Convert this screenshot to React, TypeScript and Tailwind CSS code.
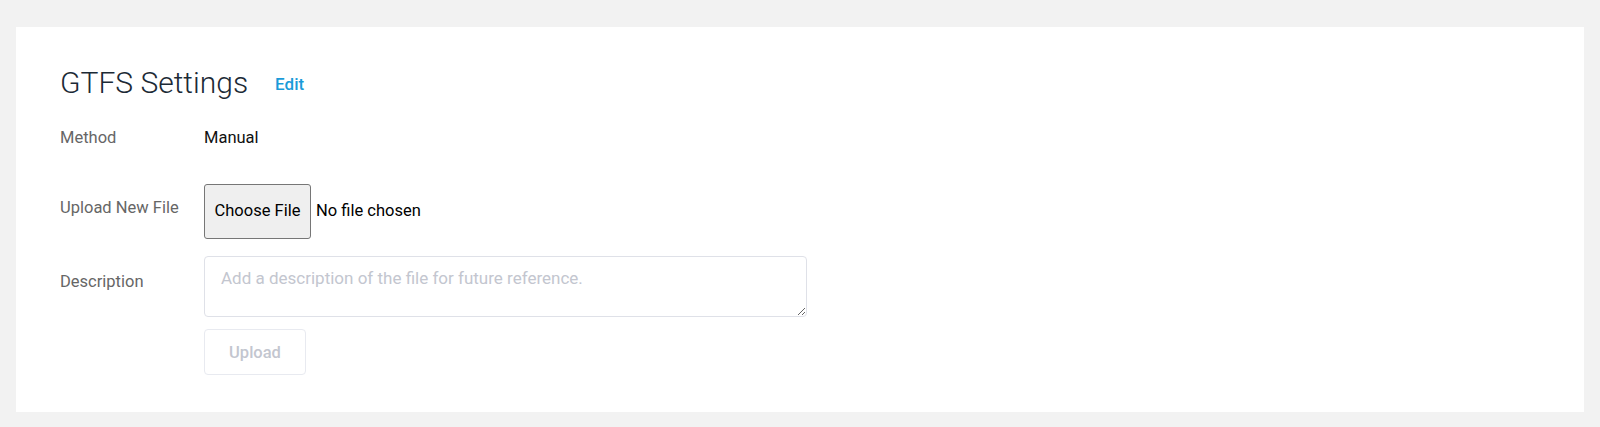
export default function App() {
  return (
    <div className="h-[427px] w-full bg-[#f2f2f2] px-4 pt-[27px] font-['Roboto',sans-serif]">
      <div className="h-[385px] bg-white pl-11 pt-9">
        <div className="flex h-10 items-center">
          <h1 className="text-[30px] font-light leading-10 text-[#1c2a36]">GTFS Settings</h1>
          <a href="#" className="ml-[27px] mt-[4px] text-[17px] font-medium text-[#1a9bd9]">Edit</a>
        </div>

        <div className="mt-[23px] flex h-6 items-center text-[16.5px]">
          <div className="w-36 text-[#666]">Method</div>
          <div className="text-[#111]">Manual</div>
        </div>

        <div className="mt-[34px] flex items-center text-[16.5px]">
          <div className="mb-[6px] w-36 text-[#666]">Upload New File</div>
          <div className="flex items-center">
            <button type="button" className="h-[55px] w-[107px] rounded-[3px] border border-[#767676] bg-[#efefef] text-[16.5px] text-black">
              Choose File
            </button>
            <span className="ml-[5px] text-[16.5px] text-black">No file chosen</span>
          </div>
        </div>

        <div className="mt-[17px] flex text-[16.5px]">
          <div className="w-36 pt-[14px] text-[#666]">Description</div>
          <div className="flex flex-col">
            <textarea
              placeholder="Add a description of the file for future reference."
              className="h-[61px] w-[603px] rounded border border-[#dfe1e8] px-4 py-[9px] text-[17px] leading-6 text-[#333] outline-none placeholder:text-[#c3c6cf]"
            />
            <button type="button" disabled className="mt-3 h-[46px] w-[102px] rounded border border-[#e8eaf0] bg-white pt-[3px] text-[16.5px] font-medium text-[#c3c6cf]">
              Upload
            </button>
          </div>
        </div>
      </div>
    </div>
  );
}
